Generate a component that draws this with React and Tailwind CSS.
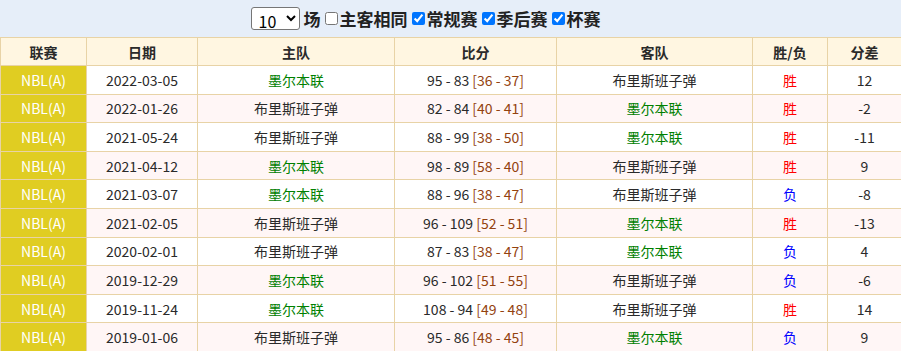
const rows = [
  ['2022-03-05', 'M', '95 - 83', '[36 - 37]', '胜', '12'],
  ['2022-01-26', 'B', '82 - 84', '[40 - 41]', '胜', '-2'],
  ['2021-05-24', 'B', '88 - 99', '[38 - 50]', '胜', '-11'],
  ['2021-04-12', 'M', '98 - 89', '[58 - 40]', '胜', '9'],
  ['2021-03-07', 'M', '88 - 96', '[38 - 47]', '负', '-8'],
  ['2021-02-05', 'B', '96 - 109', '[52 - 51]', '胜', '-13'],
  ['2020-02-01', 'B', '87 - 83', '[38 - 47]', '负', '4'],
  ['2019-12-29', 'M', '96 - 102', '[51 - 55]', '负', '-6'],
  ['2019-11-24', 'M', '108 - 94', '[49 - 48]', '胜', '14'],
  ['2019-01-06', 'B', '95 - 86', '[48 - 45]', '负', '9'],
];

const Team = ({ melb }) =>
  melb ? <span className="text-[#008000]">墨尔本联</span> : <span>布里斯班子弹</span>;

export default function App() {
  return (
    <div className="w-[901px] h-[351px] overflow-hidden bg-white text-[14px] text-[#2a2a2a] font-['Noto_Sans_CJK_SC','Noto_Sans',sans-serif]">
      {/* filter bar */}
      <div className="h-[37px] bg-[#e6eef9] flex items-center justify-center gap-[4px] pr-[50px] text-[17px] font-bold text-[#222]">
        <select className="h-[23px] w-[49px] border border-[#767676] rounded-[3px] bg-white text-[16px] font-normal px-[3px] text-black">
          <option>10</option>
        </select>
        <span>场</span>
        <label className="flex items-center gap-[2px]">
          <input type="checkbox" className="w-[13px] h-[13px] m-0" />
          <span>主客相同</span>
        </label>
        <label className="flex items-center gap-[2px]">
          <input type="checkbox" defaultChecked className="w-[13px] h-[13px] m-0" />
          <span>常规赛</span>
        </label>
        <label className="flex items-center gap-[2px]">
          <input type="checkbox" defaultChecked className="w-[13px] h-[13px] m-0" />
          <span>季后赛</span>
        </label>
        <label className="flex items-center gap-[2px]">
          <input type="checkbox" defaultChecked className="w-[13px] h-[13px] m-0" />
          <span>杯赛</span>
        </label>
      </div>

      <table className="w-[901px] border-collapse table-fixed text-center">
        <colgroup>
          <col className="w-[86px]" />
          <col className="w-[111px]" />
          <col className="w-[197px]" />
          <col className="w-[162px]" />
          <col className="w-[196px]" />
          <col className="w-[75px]" />
          <col className="w-[74px]" />
        </colgroup>
        <thead>
          <tr className="h-[28px] bg-[#fff6e1]">
            {['联赛', '日期', '主队', '比分', '客队', '胜/负', '分差'].map((h) => (
              <th key={h} className="border border-[#e8d3a6] font-bold text-[14px] p-0 leading-none">{h}</th>
            ))}
          </tr>
        </thead>
        <tbody>
          {rows.map((r, i) => (
            <tr key={i} className={`h-[28.6px] ${i % 2 ? 'bg-[#fff6f6]' : 'bg-white'}`}>
              <td className="border border-[#e8d3a6] bg-[#e0cd22] text-white p-0 leading-none">NBL(A)</td>
              <td className="border border-[#e8d3a6] p-0 leading-none">{r[0]}</td>
              <td className="border border-[#e8d3a6] p-0 leading-none"><Team melb={r[1] === 'M'} /></td>
              <td className="border border-[#e8d3a6] p-0 leading-none">
                {r[2]} <span className="text-[#93420f]">{r[3]}</span>
              </td>
              <td className="border border-[#e8d3a6] p-0 leading-none"><Team melb={r[1] !== 'M'} /></td>
              <td className={`border border-[#e8d3a6] p-0 leading-none ${r[4] === '胜' ? 'text-[#ff0000]' : 'text-[#0000ff]'}`}>{r[4]}</td>
              <td className="border border-[#e8d3a6] p-0 leading-none">{r[5]}</td>
            </tr>
          ))}
        </tbody>
      </table>
    </div>
  );
}
